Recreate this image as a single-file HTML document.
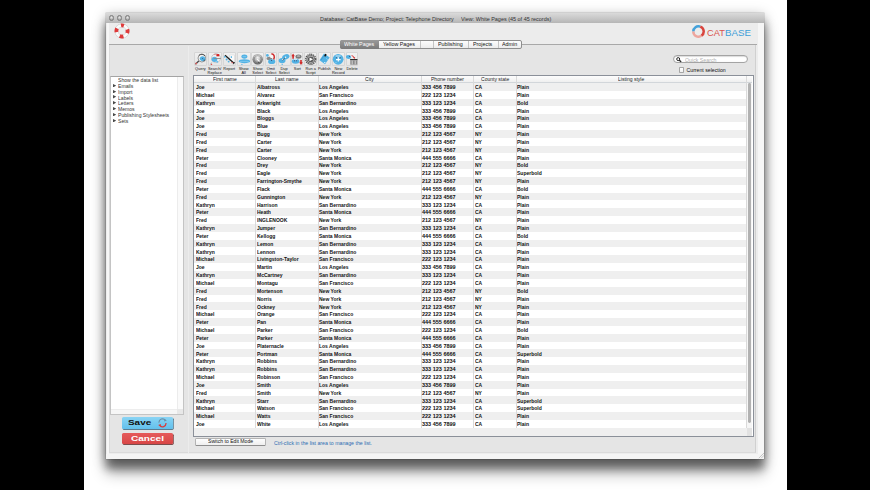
<!DOCTYPE html><html><head><meta charset="utf-8"><style>
*{margin:0;padding:0;box-sizing:border-box}
html,body{width:870px;height:490px;overflow:hidden;background:#000;font-family:"Liberation Sans",sans-serif}
.a{position:absolute}
.t{white-space:pre;line-height:1}
</style></head><body>
<div class="a" style="left:84.00px;top:0.00px;width:703.00px;height:490.00px;background:#fff"></div>
<div class="a" style="left:106.00px;top:13.10px;width:658.30px;height:445.80px;background:#ececec;box-shadow:0 3px 12px rgba(0,0,0,.34),0 10px 8px rgba(0,0,0,.32),0 14px 14px rgba(0,0,0,.32),0 0 0 0.5px rgba(0,0,0,.18)"></div>
<div class="a" style="left:106.00px;top:13.10px;width:658.30px;height:9.50px;background:linear-gradient(#dadada,#b6b6b6)"></div>
<div class="a" style="left:109.10px;top:15.20px;width:5.40px;height:5.40px;border-radius:50%;background:radial-gradient(circle at 50% 35%,#e4e4e4,#a4a4a4 80%);border:0.6px solid #7c7c7c"></div>
<div class="a" style="left:116.90px;top:15.20px;width:5.40px;height:5.40px;border-radius:50%;background:radial-gradient(circle at 50% 35%,#e4e4e4,#a4a4a4 80%);border:0.6px solid #7c7c7c"></div>
<div class="a" style="left:124.80px;top:15.20px;width:5.40px;height:5.40px;border-radius:50%;background:radial-gradient(circle at 50% 35%,#e4e4e4,#a4a4a4 80%);border:0.6px solid #7c7c7c"></div>
<div class="a t" style="left:320.20px;top:15.72px;font-size:6.0px;color:#333;transform:scaleX(0.9016);transform-origin:0 0;">Database: CatBase Demo; Project: Telephone Directory</div>
<div class="a t" style="left:460.60px;top:15.72px;font-size:6.0px;color:#333;transform:scaleX(0.9087);transform-origin:0 0;">View: White Pages (45 of 45 records)</div>
<div class="a" style="left:106.60px;top:22.60px;width:2.30px;height:436.30px;background:#f6f6f6"></div>
<div class="a" style="left:758.40px;top:22.60px;width:5.30px;height:436.30px;background:#f6f6f6"></div>
<div class="a" style="left:106.00px;top:453.50px;width:658.30px;height:5.40px;background:#f4f4f4"></div>
<div class="a" style="left:108.90px;top:44.20px;width:647.60px;height:409.30px;background:#e5e5e5;border-top:0.8px solid #c0c0c0;border-left:0.8px solid #dadada;border-right:0.8px solid #d0d0d0;border-bottom:0.8px solid #dadada"></div>
<svg class="a" style="left:757.6px;top:452.2px" width="6.4" height="6.4" viewBox="0 0 6.4 6.4"><path d="M6.2 0.8 L0.8 6.2 M6.2 3.2 L3.2 6.2" stroke="#b0b0b0" stroke-width="0.7"/></svg>
<svg class="a" style="left:113.6px;top:23.1px" width="16" height="16" viewBox="0 0 16 16">
<circle cx="8" cy="8" r="5.6" fill="none" stroke="#c8c8c8" stroke-width="3.6"/>
<circle cx="8" cy="8" r="5.6" fill="none" stroke="#fafafa" stroke-width="2.6"/>
<circle cx="8" cy="8" r="5.6" fill="none" stroke="#df3a3a" stroke-width="3.8" stroke-dasharray="3.9 4.9" stroke-dashoffset="1.95" transform="rotate(-90 8 8)"/>
</svg>
<svg class="a" style="left:691.6px;top:24.9px" width="13" height="13" viewBox="0 0 13 13">
<path d="M1.3 6.5 A5.2 5.2 0 0 1 8.3 1.6" fill="none" stroke="#45a2da" stroke-width="2.5"/>
<path d="M8.3 1.6 A5.2 5.2 0 0 1 9.4 10.8" fill="none" stroke="#d9453e" stroke-width="2.5"/>
<path d="M9.4 10.8 A5.2 5.2 0 0 1 1.3 6.5" fill="none" stroke="#eea69e" stroke-width="2.5"/>
</svg>
<div class="a t" style="left:706.80px;top:28.59px;font-size:8.4px;color:#d9524c;transform:scaleX(1.1065);transform-origin:0 0;">CAT</div>
<div class="a t" style="left:724.90px;top:28.59px;font-size:8.4px;color:#3d9ed8;transform:scaleX(1.1601);transform-origin:0 0;">BASE</div>
<div class="a" style="left:108.90px;top:44.20px;width:231.10px;height:0.90px;background:#a8a8a8"></div>
<div class="a" style="left:522.00px;top:44.20px;width:234.50px;height:0.90px;background:#a8a8a8"></div>
<div class="a" style="left:339.80px;top:40.20px;width:182.20px;height:8.50px;background:linear-gradient(#fdfdfd,#ececec);border:0.8px solid #8e8e8e;border-radius:2px"></div>
<div class="a" style="left:339.80px;top:40.20px;width:39.00px;height:8.50px;background:linear-gradient(#9a9a9a,#7a7a7a);border-radius:2px 0 0 2px"></div>
<div class="a" style="left:420.00px;top:41.00px;width:0.70px;height:6.90px;background:#c4c4c4"></div>
<div class="a" style="left:432.50px;top:41.00px;width:0.70px;height:6.90px;background:#c4c4c4"></div>
<div class="a" style="left:468.00px;top:41.00px;width:0.70px;height:6.90px;background:#c4c4c4"></div>
<div class="a" style="left:497.50px;top:41.00px;width:0.70px;height:6.90px;background:#c4c4c4"></div>
<div class="a t" style="left:344.15px;top:42.03px;font-size:5.4px;color:#fff;transform:scaleX(0.9900);transform-origin:0 0;">White Pages</div>
<div class="a t" style="left:383.05px;top:42.03px;font-size:5.4px;color:#111;transform:scaleX(0.9900);transform-origin:0 0;">Yellow Pages</div>
<div class="a t" style="left:437.87px;top:42.03px;font-size:5.4px;color:#111;transform:scaleX(0.9900);transform-origin:0 0;">Publishing</div>
<div class="a t" style="left:473.04px;top:42.03px;font-size:5.4px;color:#111;transform:scaleX(0.9900);transform-origin:0 0;">Projects</div>
<div class="a t" style="left:502.12px;top:42.03px;font-size:5.4px;color:#111;transform:scaleX(0.9900);transform-origin:0 0;">Admin</div>
<svg width="0" height="0" style="position:absolute"><defs><radialGradient id="gm" cx="50%" cy="35%" r="65%"><stop offset="0" stop-color="#f4f4f4"/><stop offset="0.6" stop-color="#a0a0a0"/><stop offset="1" stop-color="#5a5a5a"/></radialGradient></defs></svg>
<div class="a" style="left:193.70px;top:52.00px;width:13.30px;height:14.20px;background:linear-gradient(#f0f0f0,#e6e6e6);border:0.6px solid #d6d6d6;border-radius:1px"></div>
<svg class="a" style="left:194.35px;top:52.8px" width="12" height="12" viewBox="0 0 12 12"><circle cx="7.9" cy="5.1" r="3.9" fill="#f2f2f2" stroke="#8a8a8a" stroke-width="0.9"/><path d="M5 2.4 A3.9 3.9 0 0 1 11 3" fill="none" stroke="#4a4a4a" stroke-width="0.9"/><path d="M5.6 5.2 Q7 2.6 9.6 3.4 Q12 4.4 11.4 6.8 Q10.4 8.4 8 8.2 Q6 8 5.6 5.2Z" fill="#52b2e4"/><circle cx="8.6" cy="5.4" r="0.5" fill="#3a5a7a"/><circle cx="10.2" cy="7.2" r="0.6" fill="#333"/><line x1="4.8" y1="8" x2="1.4" y2="11.2" stroke="#4a4a4a" stroke-width="1.3"/><circle cx="2.2" cy="10.4" r="0.9" fill="#e06060"/></svg>
<div class="a t" style="left:195.04px;top:67.30px;font-size:3.9px;color:#111;">Query</div>
<div class="a" style="left:207.60px;top:52.00px;width:14.30px;height:14.20px;background:linear-gradient(#f0f0f0,#e6e6e6);border:0.6px solid #d6d6d6;border-radius:1px"></div>
<svg class="a" style="left:208.75px;top:52.8px" width="12" height="12" viewBox="0 0 12 12"><circle cx="7" cy="5.2" r="4.5" fill="#efefef" stroke="#b0b0b0" stroke-width="0.6"/><ellipse cx="5.4" cy="6.3" rx="2.8" ry="2.6" fill="#56b4e6"/><circle cx="8.2" cy="8.8" r="1" fill="#66c0ee"/><line x1="4.6" y1="5.5" x2="11.8" y2="5.5" stroke="#8a8a8a" stroke-width="0.9"/><rect x="7.4" y="1.1" width="2.9" height="2.2" fill="#d42020"/><path d="M4.8 1.6 L7.4 1" stroke="#e07070" stroke-width="0.7"/><line x1="2.6" y1="9.6" x2="1.4" y2="11.6" stroke="#999" stroke-width="0.8"/><circle cx="2.6" cy="11.4" r="0.6" fill="#d44"/></svg>
<div class="a t" style="left:208.03px;top:67.30px;font-size:3.9px;color:#111;">Search/</div>
<div class="a t" style="left:207.60px;top:71.00px;font-size:3.9px;color:#111;">Replace</div>
<div class="a" style="left:222.50px;top:52.00px;width:13.40px;height:14.20px;background:linear-gradient(#f0f0f0,#e6e6e6);border:0.6px solid #d6d6d6;border-radius:1px"></div>
<svg class="a" style="left:223.20px;top:52.8px" width="12" height="12" viewBox="0 0 12 12"><rect x="6.8" y="2" width="4.4" height="8" fill="#fafafa" stroke="#d0d0d0" stroke-width="0.4"/><line x1="2" y1="2.3" x2="11" y2="10.2" stroke="#222" stroke-width="1.4"/><circle cx="1.8" cy="3.8" r="0.9" fill="#50b4e6"/><circle cx="3.6" cy="6.4" r="1" fill="#50b4e6"/><circle cx="5.6" cy="8.6" r="0.9" fill="#50b4e6"/><rect x="7.8" y="3.2" width="1.1" height="1.8" fill="#50b4e6"/><rect x="8.4" y="9.2" width="1.6" height="0.9" fill="#e05050"/><path d="M11.6 9.2 L10.4 11.2" stroke="#222" stroke-width="0.9"/></svg>
<div class="a t" style="left:223.35px;top:67.30px;font-size:3.9px;color:#111;">Report</div>
<div class="a" style="left:236.50px;top:52.00px;width:14.30px;height:14.20px;background:linear-gradient(#f0f0f0,#e6e6e6);border:0.6px solid #d6d6d6;border-radius:1px"></div>
<svg class="a" style="left:237.65px;top:52.8px" width="12" height="12" viewBox="0 0 12 12"><ellipse cx="6.4" cy="3.6" rx="3" ry="2.1" fill="#52b2e4"/><ellipse cx="6.4" cy="8.2" rx="5.8" ry="1.95" fill="#52b2e4"/><rect x="4.6" y="3.4" width="3.6" height="0.7" fill="#8fd0f0"/><rect x="2" y="8" width="8.8" height="0.6" fill="#8fd0f0"/><circle cx="3.9" cy="11.4" r="0.6" fill="#52b2e4"/></svg>
<div class="a t" style="left:238.77px;top:67.30px;font-size:3.9px;color:#111;">Show</div>
<div class="a t" style="left:241.48px;top:71.00px;font-size:3.9px;color:#111;">All</div>
<div class="a" style="left:251.40px;top:52.00px;width:12.70px;height:14.20px;background:linear-gradient(#f0f0f0,#e6e6e6);border:0.6px solid #d6d6d6;border-radius:1px"></div>
<svg class="a" style="left:251.75px;top:52.8px" width="12" height="12" viewBox="0 0 12 12"><circle cx="5.7" cy="6.2" r="5.2" fill="url(#gm)"/><path d="M2.6 3.6 Q5.7 1.8 8.8 3.6" fill="none" stroke="#fafafa" stroke-width="1"/><circle cx="5.7" cy="6.2" r="3.6" fill="none" stroke="#7a7a7a" stroke-width="0.6"/><path d="M5 6.2 L7.6 8.4" stroke="#fff" stroke-width="1.1"/><circle cx="6.8" cy="9.4" r="0.5" fill="#333"/></svg>
<div class="a t" style="left:252.87px;top:67.30px;font-size:3.9px;color:#111;">Show</div>
<div class="a t" style="left:252.33px;top:71.00px;font-size:3.9px;color:#111;">Select</div>
<div class="a" style="left:264.70px;top:52.00px;width:12.30px;height:14.20px;background:linear-gradient(#f0f0f0,#e6e6e6);border:0.6px solid #d6d6d6;border-radius:1px"></div>
<svg class="a" style="left:264.85px;top:52.8px" width="12" height="12" viewBox="0 0 12 12"><circle cx="2.4" cy="2.4" r="1.4" fill="#52b2e4"/><ellipse cx="4.4" cy="5.4" rx="2.9" ry="1.7" fill="#8a8a8a"/><rect x="5.4" y="2" width="2.4" height="3" fill="#fafafa"/><path d="M6.4 0.8 Q10.8 1.6 8.6 6.6" fill="none" stroke="#d03030" stroke-width="1.5"/><ellipse cx="6.7" cy="8.7" rx="3.6" ry="2.4" fill="#52b2e4"/><circle cx="6.6" cy="7.6" r="0.5" fill="#335"/></svg>
<div class="a t" style="left:266.73px;top:67.30px;font-size:3.9px;color:#111;">Omit</div>
<div class="a t" style="left:265.43px;top:71.00px;font-size:3.9px;color:#111;">Select</div>
<div class="a" style="left:277.60px;top:52.00px;width:13.10px;height:14.20px;background:linear-gradient(#f0f0f0,#e6e6e6);border:0.6px solid #d6d6d6;border-radius:1px"></div>
<svg class="a" style="left:278.15px;top:52.8px" width="12" height="12" viewBox="0 0 12 12"><ellipse cx="4.1" cy="7.6" rx="3.4" ry="2.7" fill="#52b2e4"/><ellipse cx="7.8" cy="3.9" rx="3.8" ry="2.6" fill="#52b2e4" transform="rotate(-20 7.8 3.9)"/><path d="M4.6 7.4 L7.8 4" stroke="#555" stroke-width="0.7"/><circle cx="7.6" cy="4.2" r="0.7" fill="#fff"/><circle cx="4.6" cy="6.4" r="0.6" fill="#ddd"/><circle cx="4.2" cy="11.4" r="0.6" fill="#52b2e4"/></svg>
<div class="a t" style="left:280.57px;top:67.30px;font-size:3.9px;color:#111;">Dup</div>
<div class="a t" style="left:278.73px;top:71.00px;font-size:3.9px;color:#111;">Select</div>
<div class="a" style="left:291.30px;top:52.00px;width:12.20px;height:14.20px;background:linear-gradient(#f0f0f0,#e6e6e6);border:0.6px solid #d6d6d6;border-radius:1px"></div>
<svg class="a" style="left:291.40px;top:52.8px" width="12" height="12" viewBox="0 0 12 12"><ellipse cx="7.5" cy="3.6" rx="3" ry="2.2" fill="#7a7a7a"/><ellipse cx="7.5" cy="3" rx="1.8" ry="0.6" fill="#d8d8d8"/><path d="M2.1 0.4 L3.7 3 L2.9 3.4 L2.9 5.8 L1.3 5.8 L1.3 3.4 L0.5 3Z" fill="#d02a2a"/><ellipse cx="4.6" cy="8.2" rx="3.8" ry="2.5" fill="#52b2e4"/><rect x="2.6" y="6.2" width="3.6" height="0.9" fill="#dff0f8"/><circle cx="3.6" cy="7.8" r="0.5" fill="#335"/><circle cx="5.6" cy="7.8" r="0.5" fill="#335"/><path d="M10 12 L11.7 9.4 L10.8 9 L10.8 7 L9.2 7 L9.2 9 L8.3 9.4Z" fill="#d02a2a"/></svg>
<div class="a t" style="left:293.82px;top:67.30px;font-size:3.9px;color:#111;">Sort</div>
<div class="a" style="left:304.10px;top:52.00px;width:13.10px;height:14.20px;background:linear-gradient(#f0f0f0,#e6e6e6);border:0.6px solid #d6d6d6;border-radius:1px"></div>
<svg class="a" style="left:304.65px;top:52.8px" width="12" height="12" viewBox="0 0 12 12"><circle cx="5.75" cy="6.3" r="5" fill="none" stroke="#555" stroke-width="1.4" stroke-dasharray="1.2 0.75"/><circle cx="5.75" cy="6.3" r="4" fill="#cfcfcf" stroke="#555" stroke-width="0.8"/><circle cx="5.75" cy="6.3" r="2.9" fill="#5a5a5a"/><path d="M4.5 4.4 L8 6.3 L4.5 8.2Z" fill="#fff"/></svg>
<div class="a t" style="left:305.45px;top:67.30px;font-size:3.9px;color:#111;">Run a</div>
<div class="a t" style="left:305.67px;top:71.00px;font-size:3.9px;color:#111;">Script</div>
<div class="a" style="left:317.80px;top:52.00px;width:13.20px;height:14.20px;background:linear-gradient(#f0f0f0,#e6e6e6);border:0.6px solid #d6d6d6;border-radius:1px"></div>
<svg class="a" style="left:318.40px;top:52.8px" width="12" height="12" viewBox="0 0 12 12"><path d="M1.5 7.2 L6 0.4 L11.7 4.6 L7 11.3Z" fill="#52b2e4"/><path d="M3 7 L6.4 2" stroke="#3a8abb" stroke-width="0.6"/><ellipse cx="7.4" cy="2.2" rx="0.9" ry="1.5" fill="#111" transform="rotate(30 7.4 2.2)"/><circle cx="6.8" cy="9.6" r="0.7" fill="#fff"/><path d="M8 5 L10 7" stroke="#8fd0f0" stroke-width="0.7"/></svg>
<div class="a t" style="left:318.00px;top:67.30px;font-size:3.9px;color:#111;">Publish</div>
<div class="a" style="left:331.60px;top:52.00px;width:13.50px;height:14.20px;background:linear-gradient(#f0f0f0,#e6e6e6);border:0.6px solid #d6d6d6;border-radius:1px"></div>
<svg class="a" style="left:332.35px;top:52.8px" width="12" height="12" viewBox="0 0 12 12"><circle cx="6.15" cy="6.3" r="5.4" fill="#52b2e4"/><rect x="3.6" y="2.6" width="5" height="0.8" fill="#f4f4f4"/><path d="M6.3 4.2 V8.6 M4 6.6 H8.6" stroke="#fff" stroke-width="1.1"/><circle cx="4.4" cy="4.8" r="0.5" fill="#335"/><circle cx="8.2" cy="4.8" r="0.5" fill="#335"/><circle cx="4" cy="9.6" r="0.7" fill="#8fd0f0"/></svg>
<div class="a t" style="left:334.45px;top:67.30px;font-size:3.9px;color:#111;">New</div>
<div class="a t" style="left:332.06px;top:71.00px;font-size:3.9px;color:#111;">Record</div>
<div class="a" style="left:345.70px;top:52.00px;width:12.70px;height:14.20px;background:linear-gradient(#f0f0f0,#e6e6e6);border:0.6px solid #d6d6d6;border-radius:1px"></div>
<svg class="a" style="left:346.05px;top:52.8px" width="12" height="12" viewBox="0 0 12 12"><ellipse cx="2.5" cy="3.9" rx="2.6" ry="2" fill="#52b2e4"/><circle cx="3.6" cy="3.2" r="0.5" fill="#335"/><path d="M5.6 2.6 Q7.6 2.8 8.2 5" fill="none" stroke="#d42a2a" stroke-width="0.9"/><path d="M7.2 4.4 L8.4 6 L9.2 4.2Z" fill="#d42a2a"/><rect x="4" y="6" width="7.6" height="1.3" rx="0.6" fill="#2a2a2a"/><rect x="4.3" y="7.3" width="7" height="4.4" fill="#8a8a8a"/><path d="M6.2 7.6 V11.4 M9.2 7.6 V11.4" stroke="#e8e8e8" stroke-width="0.8"/></svg>
<div class="a t" style="left:346.41px;top:67.30px;font-size:3.9px;color:#111;">Delete</div>
<div class="a" style="left:673.30px;top:55.30px;width:74.60px;height:7.90px;background:#fff;border:0.7px solid #a4a4a4;border-radius:5px;box-shadow:inset 0 0.6px 1px rgba(0,0,0,.25)"></div>
<svg class="a" style="left:676.4px;top:57.2px" width="6" height="5.4" viewBox="0 0 6 5.4"><circle cx="2.2" cy="2.1" r="1.5" fill="none" stroke="#222" stroke-width="1"/><line x1="3.2" y1="3.2" x2="5.2" y2="4.8" stroke="#222" stroke-width="1.3"/></svg>
<div class="a t" style="left:684.90px;top:58.10px;font-size:5.2px;color:#b0b0b0;transform:scaleX(1.0092);transform-origin:0 0;">Quick Search</div>
<div class="a" style="left:679.10px;top:67.40px;width:5.30px;height:5.30px;background:linear-gradient(#fff,#f0f0f0);border:0.7px solid #a6a6a6;border-radius:0.8px"></div>
<div class="a t" style="left:686.50px;top:67.60px;font-size:5.2px;color:#111;">Current selection</div>
<div class="a" style="left:110.30px;top:76.00px;width:73.70px;height:339.00px;background:#fff;border:0.8px solid #c4c4c4;border-top-color:#a4a4a4"></div>
<div class="a" style="left:177.40px;top:76.80px;width:5.80px;height:337.40px;background:#fafafa;border-left:0.6px solid #ececec"></div>
<div class="a" style="left:111.10px;top:409.00px;width:66.30px;height:5.20px;background:#f6f6f6;border-top:0.6px solid #ededed"></div>
<div class="a" style="left:177.40px;top:409.00px;width:5.80px;height:5.20px;background:#e8e8e8"></div>
<div class="a t" style="left:118.10px;top:78.00px;font-size:5.2px;color:#333;transform:scaleX(0.9800);transform-origin:0 0;">Show the data list</div>
<svg class="a" style="left:112.8px;top:83.66px" width="3.2" height="3.4" viewBox="0 0 3.2 3.4"><path d="M0 0 L3.2 1.7 L0 3.4Z" fill="#4a4a4a"/></svg>
<div class="a t" style="left:118.10px;top:83.86px;font-size:5.2px;color:#333;transform:scaleX(0.9800);transform-origin:0 0;">Emails</div>
<svg class="a" style="left:112.8px;top:89.52px" width="3.2" height="3.4" viewBox="0 0 3.2 3.4"><path d="M0 0 L3.2 1.7 L0 3.4Z" fill="#4a4a4a"/></svg>
<div class="a t" style="left:118.10px;top:89.72px;font-size:5.2px;color:#333;transform:scaleX(0.9800);transform-origin:0 0;">Import</div>
<svg class="a" style="left:112.8px;top:95.38px" width="3.2" height="3.4" viewBox="0 0 3.2 3.4"><path d="M0 0 L3.2 1.7 L0 3.4Z" fill="#4a4a4a"/></svg>
<div class="a t" style="left:118.10px;top:95.58px;font-size:5.2px;color:#333;transform:scaleX(0.9800);transform-origin:0 0;">Labels</div>
<svg class="a" style="left:112.8px;top:101.24px" width="3.2" height="3.4" viewBox="0 0 3.2 3.4"><path d="M0 0 L3.2 1.7 L0 3.4Z" fill="#4a4a4a"/></svg>
<div class="a t" style="left:118.10px;top:101.44px;font-size:5.2px;color:#333;transform:scaleX(0.9800);transform-origin:0 0;">Letters</div>
<svg class="a" style="left:112.8px;top:107.10px" width="3.2" height="3.4" viewBox="0 0 3.2 3.4"><path d="M0 0 L3.2 1.7 L0 3.4Z" fill="#4a4a4a"/></svg>
<div class="a t" style="left:118.10px;top:107.30px;font-size:5.2px;color:#333;transform:scaleX(0.9800);transform-origin:0 0;">Memos</div>
<svg class="a" style="left:112.8px;top:112.96px" width="3.2" height="3.4" viewBox="0 0 3.2 3.4"><path d="M0 0 L3.2 1.7 L0 3.4Z" fill="#4a4a4a"/></svg>
<div class="a t" style="left:118.10px;top:113.16px;font-size:5.2px;color:#333;transform:scaleX(0.9800);transform-origin:0 0;">Publishing Stylesheets</div>
<svg class="a" style="left:112.8px;top:118.82px" width="3.2" height="3.4" viewBox="0 0 3.2 3.4"><path d="M0 0 L3.2 1.7 L0 3.4Z" fill="#4a4a4a"/></svg>
<div class="a t" style="left:118.10px;top:119.02px;font-size:5.2px;color:#333;transform:scaleX(0.9800);transform-origin:0 0;">Sets</div>
<div class="a" style="left:188.30px;top:45.60px;width:0.80px;height:407.90px;background:#ececec"></div>
<div class="a" style="left:121.80px;top:417.00px;width:51.40px;height:11.50px;background:linear-gradient(#8ad4f4,#62c0ec);border-radius:1.5px;box-shadow:0.6px 0.8px 0 #2e5a74"></div>
<div class="a t" style="left:127.70px;top:418.60px;font-size:7.8px;color:#111;font-weight:bold;transform:scaleX(1.2736);transform-origin:0 0;">Save</div>
<svg class="a" style="left:156.6px;top:418.4px" width="11" height="9.6" viewBox="0 0 11 9.6"><path d="M2 4.6 A3.5 3.5 0 0 1 8.4 2.4" fill="none" stroke="#6a8fa8" stroke-width="1.2"/><path d="M9 5 A3.5 3.5 0 0 1 2.6 7.2" fill="none" stroke="#d83c3c" stroke-width="1.2"/><path d="M7.4 0.9 L9.8 2.6 L7.2 3.6Z" fill="#6a8fa8"/><path d="M3.6 8.7 L1.2 7 L3.8 6Z" fill="#d83c3c"/></svg>
<div class="a" style="left:121.80px;top:433.00px;width:51.40px;height:11.20px;background:linear-gradient(#e55a5a,#d84646);border-radius:1.5px;box-shadow:0.6px 0.8px 0 #5a1a1a"></div>
<div class="a t" style="left:130.80px;top:434.74px;font-size:7.4px;color:#fff;font-weight:bold;transform:scaleX(1.3600);transform-origin:0 0;">Cancel</div>
<div class="a" style="left:194.60px;top:438.00px;width:71.30px;height:7.60px;background:linear-gradient(#fefefe,#efefef);border:0.7px solid #b4b4b4;border-bottom-color:#8e8e8e;border-radius:1.5px"></div>
<div class="a t" style="left:207.80px;top:438.83px;font-size:5.4px;color:#111;transform:scaleX(0.9472);transform-origin:0 0;">Switch to Edit Mode</div>
<div class="a t" style="left:273.50px;top:440.70px;font-size:5.2px;color:#2c6db2;transform:scaleX(1.0054);transform-origin:0 0;">Ctrl-click in the list area to manage the list.</div>
<div class="a" style="left:193.00px;top:75.00px;width:560.60px;height:361.60px;background:#fff;border:1.1px solid #8b9099"></div>
<div class="a" style="left:194.10px;top:76.10px;width:558.40px;height:6.75px;background:linear-gradient(#fdfdfd,#efefef);border-bottom:0.8px solid #d2d6da"></div>
<div class="a" style="left:194.10px;top:82.85px;width:552.60px;height:7.84px;background:#efefef"></div>
<div class="a" style="left:194.10px;top:98.53px;width:552.60px;height:7.84px;background:#efefef"></div>
<div class="a" style="left:194.10px;top:114.21px;width:552.60px;height:7.84px;background:#efefef"></div>
<div class="a" style="left:194.10px;top:129.89px;width:552.60px;height:7.84px;background:#efefef"></div>
<div class="a" style="left:194.10px;top:145.57px;width:552.60px;height:7.84px;background:#efefef"></div>
<div class="a" style="left:194.10px;top:161.25px;width:552.60px;height:7.84px;background:#efefef"></div>
<div class="a" style="left:194.10px;top:176.93px;width:552.60px;height:7.84px;background:#efefef"></div>
<div class="a" style="left:194.10px;top:192.61px;width:552.60px;height:7.84px;background:#efefef"></div>
<div class="a" style="left:194.10px;top:208.29px;width:552.60px;height:7.84px;background:#efefef"></div>
<div class="a" style="left:194.10px;top:223.97px;width:552.60px;height:7.84px;background:#efefef"></div>
<div class="a" style="left:194.10px;top:239.65px;width:552.60px;height:7.84px;background:#efefef"></div>
<div class="a" style="left:194.10px;top:255.33px;width:552.60px;height:7.84px;background:#efefef"></div>
<div class="a" style="left:194.10px;top:271.01px;width:552.60px;height:7.84px;background:#efefef"></div>
<div class="a" style="left:194.10px;top:286.69px;width:552.60px;height:7.84px;background:#efefef"></div>
<div class="a" style="left:194.10px;top:302.37px;width:552.60px;height:7.84px;background:#efefef"></div>
<div class="a" style="left:194.10px;top:318.05px;width:552.60px;height:7.84px;background:#efefef"></div>
<div class="a" style="left:194.10px;top:333.73px;width:552.60px;height:7.84px;background:#efefef"></div>
<div class="a" style="left:194.10px;top:349.41px;width:552.60px;height:7.84px;background:#efefef"></div>
<div class="a" style="left:194.10px;top:365.09px;width:552.60px;height:7.84px;background:#efefef"></div>
<div class="a" style="left:194.10px;top:380.77px;width:552.60px;height:7.84px;background:#efefef"></div>
<div class="a" style="left:194.10px;top:396.45px;width:552.60px;height:7.84px;background:#efefef"></div>
<div class="a" style="left:194.10px;top:412.13px;width:552.60px;height:7.84px;background:#efefef"></div>
<div class="a" style="left:194.10px;top:427.81px;width:552.60px;height:7.69px;background:#efefef"></div>
<div class="a" style="left:194.10px;top:428.00px;width:558.40px;height:7.50px;background:#efefef"></div>
<div class="a" style="left:255.10px;top:76.10px;width:0.80px;height:351.90px;background:#dadada"></div>
<div class="a" style="left:317.90px;top:76.10px;width:0.80px;height:351.90px;background:#dadada"></div>
<div class="a" style="left:420.60px;top:76.10px;width:0.80px;height:351.90px;background:#dadada"></div>
<div class="a" style="left:473.40px;top:76.10px;width:0.80px;height:351.90px;background:#dadada"></div>
<div class="a" style="left:515.50px;top:76.10px;width:0.80px;height:351.90px;background:#dadada"></div>
<div class="a" style="left:746.30px;top:76.10px;width:0.80px;height:351.90px;background:#dadada"></div>
<div class="a" style="left:746.70px;top:82.85px;width:5.80px;height:352.65px;background:#f6f6f6"></div>
<div class="a" style="left:748.10px;top:83.30px;width:2.90px;height:339.30px;background:#b2b2b2;border-radius:1.4px"></div>
<div class="a" style="left:746.70px;top:428.00px;width:5.80px;height:7.50px;background:#e2e2e2"></div>
<div class="a t" style="left:213.11px;top:76.51px;font-size:5.3px;color:#222;transform:scaleX(0.9500);transform-origin:0 0;">First name</div>
<div class="a t" style="left:275.15px;top:76.51px;font-size:5.3px;color:#222;transform:scaleX(0.9500);transform-origin:0 0;">Last name</div>
<div class="a t" style="left:365.31px;top:76.51px;font-size:5.3px;color:#222;transform:scaleX(0.9500);transform-origin:0 0;">City</div>
<div class="a t" style="left:430.89px;top:76.51px;font-size:5.3px;color:#222;transform:scaleX(0.9500);transform-origin:0 0;">Phone number</div>
<div class="a t" style="left:480.72px;top:76.51px;font-size:5.3px;color:#222;transform:scaleX(0.9500);transform-origin:0 0;">County state</div>
<div class="a t" style="left:618.15px;top:76.51px;font-size:5.3px;color:#222;transform:scaleX(0.9500);transform-origin:0 0;">Listing style</div>
<div class="a t" style="left:195.70px;top:84.99px;font-size:5.5px;color:#111;font-weight:bold;transform:scaleX(0.9100);transform-origin:0 0;">Joe</div>
<div class="a t" style="left:256.50px;top:84.99px;font-size:5.5px;color:#111;font-weight:bold;transform:scaleX(0.9100);transform-origin:0 0;">Albatross</div>
<div class="a t" style="left:319.30px;top:84.99px;font-size:5.5px;color:#111;font-weight:bold;transform:scaleX(0.9100);transform-origin:0 0;">Los Angeles</div>
<div class="a t" style="left:422.00px;top:84.99px;font-size:5.5px;color:#111;font-weight:bold;">333 456 7899</div>
<div class="a t" style="left:474.80px;top:84.99px;font-size:5.5px;color:#111;font-weight:bold;transform:scaleX(0.9100);transform-origin:0 0;">CA</div>
<div class="a t" style="left:516.90px;top:84.99px;font-size:5.5px;color:#111;font-weight:bold;transform:scaleX(0.9100);transform-origin:0 0;">Plain</div>
<div class="a t" style="left:195.70px;top:92.83px;font-size:5.5px;color:#111;font-weight:bold;transform:scaleX(0.9100);transform-origin:0 0;">Michael</div>
<div class="a t" style="left:256.50px;top:92.83px;font-size:5.5px;color:#111;font-weight:bold;transform:scaleX(0.9100);transform-origin:0 0;">Alvarez</div>
<div class="a t" style="left:319.30px;top:92.83px;font-size:5.5px;color:#111;font-weight:bold;transform:scaleX(0.9100);transform-origin:0 0;">San Francisco</div>
<div class="a t" style="left:422.00px;top:92.83px;font-size:5.5px;color:#111;font-weight:bold;">222 123 1234</div>
<div class="a t" style="left:474.80px;top:92.83px;font-size:5.5px;color:#111;font-weight:bold;transform:scaleX(0.9100);transform-origin:0 0;">CA</div>
<div class="a t" style="left:516.90px;top:92.83px;font-size:5.5px;color:#111;font-weight:bold;transform:scaleX(0.9100);transform-origin:0 0;">Plain</div>
<div class="a t" style="left:195.70px;top:100.67px;font-size:5.5px;color:#111;font-weight:bold;transform:scaleX(0.9100);transform-origin:0 0;">Kathryn</div>
<div class="a t" style="left:256.50px;top:100.67px;font-size:5.5px;color:#111;font-weight:bold;transform:scaleX(0.9100);transform-origin:0 0;">Arkwright</div>
<div class="a t" style="left:319.30px;top:100.67px;font-size:5.5px;color:#111;font-weight:bold;transform:scaleX(0.9100);transform-origin:0 0;">San Bernardino</div>
<div class="a t" style="left:422.00px;top:100.67px;font-size:5.5px;color:#111;font-weight:bold;">333 123 1234</div>
<div class="a t" style="left:474.80px;top:100.67px;font-size:5.5px;color:#111;font-weight:bold;transform:scaleX(0.9100);transform-origin:0 0;">CA</div>
<div class="a t" style="left:516.90px;top:100.67px;font-size:5.5px;color:#111;font-weight:bold;transform:scaleX(0.9100);transform-origin:0 0;">Bold</div>
<div class="a t" style="left:195.70px;top:108.51px;font-size:5.5px;color:#111;font-weight:bold;transform:scaleX(0.9100);transform-origin:0 0;">Joe</div>
<div class="a t" style="left:256.50px;top:108.51px;font-size:5.5px;color:#111;font-weight:bold;transform:scaleX(0.9100);transform-origin:0 0;">Black</div>
<div class="a t" style="left:319.30px;top:108.51px;font-size:5.5px;color:#111;font-weight:bold;transform:scaleX(0.9100);transform-origin:0 0;">Los Angeles</div>
<div class="a t" style="left:422.00px;top:108.51px;font-size:5.5px;color:#111;font-weight:bold;">333 456 7899</div>
<div class="a t" style="left:474.80px;top:108.51px;font-size:5.5px;color:#111;font-weight:bold;transform:scaleX(0.9100);transform-origin:0 0;">CA</div>
<div class="a t" style="left:516.90px;top:108.51px;font-size:5.5px;color:#111;font-weight:bold;transform:scaleX(0.9100);transform-origin:0 0;">Plain</div>
<div class="a t" style="left:195.70px;top:116.35px;font-size:5.5px;color:#111;font-weight:bold;transform:scaleX(0.9100);transform-origin:0 0;">Joe</div>
<div class="a t" style="left:256.50px;top:116.35px;font-size:5.5px;color:#111;font-weight:bold;transform:scaleX(0.9100);transform-origin:0 0;">Bloggs</div>
<div class="a t" style="left:319.30px;top:116.35px;font-size:5.5px;color:#111;font-weight:bold;transform:scaleX(0.9100);transform-origin:0 0;">Los Angeles</div>
<div class="a t" style="left:422.00px;top:116.35px;font-size:5.5px;color:#111;font-weight:bold;">333 456 7899</div>
<div class="a t" style="left:474.80px;top:116.35px;font-size:5.5px;color:#111;font-weight:bold;transform:scaleX(0.9100);transform-origin:0 0;">CA</div>
<div class="a t" style="left:516.90px;top:116.35px;font-size:5.5px;color:#111;font-weight:bold;transform:scaleX(0.9100);transform-origin:0 0;">Plain</div>
<div class="a t" style="left:195.70px;top:124.19px;font-size:5.5px;color:#111;font-weight:bold;transform:scaleX(0.9100);transform-origin:0 0;">Joe</div>
<div class="a t" style="left:256.50px;top:124.19px;font-size:5.5px;color:#111;font-weight:bold;transform:scaleX(0.9100);transform-origin:0 0;">Blue</div>
<div class="a t" style="left:319.30px;top:124.19px;font-size:5.5px;color:#111;font-weight:bold;transform:scaleX(0.9100);transform-origin:0 0;">Los Angeles</div>
<div class="a t" style="left:422.00px;top:124.19px;font-size:5.5px;color:#111;font-weight:bold;">333 456 7899</div>
<div class="a t" style="left:474.80px;top:124.19px;font-size:5.5px;color:#111;font-weight:bold;transform:scaleX(0.9100);transform-origin:0 0;">CA</div>
<div class="a t" style="left:516.90px;top:124.19px;font-size:5.5px;color:#111;font-weight:bold;transform:scaleX(0.9100);transform-origin:0 0;">Plain</div>
<div class="a t" style="left:195.70px;top:132.03px;font-size:5.5px;color:#111;font-weight:bold;transform:scaleX(0.9100);transform-origin:0 0;">Fred</div>
<div class="a t" style="left:256.50px;top:132.03px;font-size:5.5px;color:#111;font-weight:bold;transform:scaleX(0.9100);transform-origin:0 0;">Bugg</div>
<div class="a t" style="left:319.30px;top:132.03px;font-size:5.5px;color:#111;font-weight:bold;transform:scaleX(0.9100);transform-origin:0 0;">New York</div>
<div class="a t" style="left:422.00px;top:132.03px;font-size:5.5px;color:#111;font-weight:bold;">212 123 4567</div>
<div class="a t" style="left:474.80px;top:132.03px;font-size:5.5px;color:#111;font-weight:bold;transform:scaleX(0.9100);transform-origin:0 0;">NY</div>
<div class="a t" style="left:516.90px;top:132.03px;font-size:5.5px;color:#111;font-weight:bold;transform:scaleX(0.9100);transform-origin:0 0;">Plain</div>
<div class="a t" style="left:195.70px;top:139.87px;font-size:5.5px;color:#111;font-weight:bold;transform:scaleX(0.9100);transform-origin:0 0;">Fred</div>
<div class="a t" style="left:256.50px;top:139.87px;font-size:5.5px;color:#111;font-weight:bold;transform:scaleX(0.9100);transform-origin:0 0;">Carter</div>
<div class="a t" style="left:319.30px;top:139.87px;font-size:5.5px;color:#111;font-weight:bold;transform:scaleX(0.9100);transform-origin:0 0;">New York</div>
<div class="a t" style="left:422.00px;top:139.87px;font-size:5.5px;color:#111;font-weight:bold;">212 123 4567</div>
<div class="a t" style="left:474.80px;top:139.87px;font-size:5.5px;color:#111;font-weight:bold;transform:scaleX(0.9100);transform-origin:0 0;">NY</div>
<div class="a t" style="left:516.90px;top:139.87px;font-size:5.5px;color:#111;font-weight:bold;transform:scaleX(0.9100);transform-origin:0 0;">Plain</div>
<div class="a t" style="left:195.70px;top:147.71px;font-size:5.5px;color:#111;font-weight:bold;transform:scaleX(0.9100);transform-origin:0 0;">Fred</div>
<div class="a t" style="left:256.50px;top:147.71px;font-size:5.5px;color:#111;font-weight:bold;transform:scaleX(0.9100);transform-origin:0 0;">Carter</div>
<div class="a t" style="left:319.30px;top:147.71px;font-size:5.5px;color:#111;font-weight:bold;transform:scaleX(0.9100);transform-origin:0 0;">New York</div>
<div class="a t" style="left:422.00px;top:147.71px;font-size:5.5px;color:#111;font-weight:bold;">212 123 4567</div>
<div class="a t" style="left:474.80px;top:147.71px;font-size:5.5px;color:#111;font-weight:bold;transform:scaleX(0.9100);transform-origin:0 0;">NY</div>
<div class="a t" style="left:516.90px;top:147.71px;font-size:5.5px;color:#111;font-weight:bold;transform:scaleX(0.9100);transform-origin:0 0;">Plain</div>
<div class="a t" style="left:195.70px;top:155.55px;font-size:5.5px;color:#111;font-weight:bold;transform:scaleX(0.9100);transform-origin:0 0;">Peter</div>
<div class="a t" style="left:256.50px;top:155.55px;font-size:5.5px;color:#111;font-weight:bold;transform:scaleX(0.9100);transform-origin:0 0;">Clooney</div>
<div class="a t" style="left:319.30px;top:155.55px;font-size:5.5px;color:#111;font-weight:bold;transform:scaleX(0.9100);transform-origin:0 0;">Santa Monica</div>
<div class="a t" style="left:422.00px;top:155.55px;font-size:5.5px;color:#111;font-weight:bold;">444 555 6666</div>
<div class="a t" style="left:474.80px;top:155.55px;font-size:5.5px;color:#111;font-weight:bold;transform:scaleX(0.9100);transform-origin:0 0;">CA</div>
<div class="a t" style="left:516.90px;top:155.55px;font-size:5.5px;color:#111;font-weight:bold;transform:scaleX(0.9100);transform-origin:0 0;">Plain</div>
<div class="a t" style="left:195.70px;top:163.39px;font-size:5.5px;color:#111;font-weight:bold;transform:scaleX(0.9100);transform-origin:0 0;">Fred</div>
<div class="a t" style="left:256.50px;top:163.39px;font-size:5.5px;color:#111;font-weight:bold;transform:scaleX(0.9100);transform-origin:0 0;">Drey</div>
<div class="a t" style="left:319.30px;top:163.39px;font-size:5.5px;color:#111;font-weight:bold;transform:scaleX(0.9100);transform-origin:0 0;">New York</div>
<div class="a t" style="left:422.00px;top:163.39px;font-size:5.5px;color:#111;font-weight:bold;">212 123 4567</div>
<div class="a t" style="left:474.80px;top:163.39px;font-size:5.5px;color:#111;font-weight:bold;transform:scaleX(0.9100);transform-origin:0 0;">NY</div>
<div class="a t" style="left:516.90px;top:163.39px;font-size:5.5px;color:#111;font-weight:bold;transform:scaleX(0.9100);transform-origin:0 0;">Bold</div>
<div class="a t" style="left:195.70px;top:171.23px;font-size:5.5px;color:#111;font-weight:bold;transform:scaleX(0.9100);transform-origin:0 0;">Fred</div>
<div class="a t" style="left:256.50px;top:171.23px;font-size:5.5px;color:#111;font-weight:bold;transform:scaleX(0.9100);transform-origin:0 0;">Eagle</div>
<div class="a t" style="left:319.30px;top:171.23px;font-size:5.5px;color:#111;font-weight:bold;transform:scaleX(0.9100);transform-origin:0 0;">New York</div>
<div class="a t" style="left:422.00px;top:171.23px;font-size:5.5px;color:#111;font-weight:bold;">212 123 4567</div>
<div class="a t" style="left:474.80px;top:171.23px;font-size:5.5px;color:#111;font-weight:bold;transform:scaleX(0.9100);transform-origin:0 0;">NY</div>
<div class="a t" style="left:516.90px;top:171.23px;font-size:5.5px;color:#111;font-weight:bold;transform:scaleX(0.9100);transform-origin:0 0;">Superbold</div>
<div class="a t" style="left:195.70px;top:179.07px;font-size:5.5px;color:#111;font-weight:bold;transform:scaleX(0.9100);transform-origin:0 0;">Fred</div>
<div class="a t" style="left:256.50px;top:179.07px;font-size:5.5px;color:#111;font-weight:bold;transform:scaleX(0.9100);transform-origin:0 0;">Farrington-Smythe</div>
<div class="a t" style="left:319.30px;top:179.07px;font-size:5.5px;color:#111;font-weight:bold;transform:scaleX(0.9100);transform-origin:0 0;">New York</div>
<div class="a t" style="left:422.00px;top:179.07px;font-size:5.5px;color:#111;font-weight:bold;">212 123 4567</div>
<div class="a t" style="left:474.80px;top:179.07px;font-size:5.5px;color:#111;font-weight:bold;transform:scaleX(0.9100);transform-origin:0 0;">NY</div>
<div class="a t" style="left:516.90px;top:179.07px;font-size:5.5px;color:#111;font-weight:bold;transform:scaleX(0.9100);transform-origin:0 0;">Plain</div>
<div class="a t" style="left:195.70px;top:186.91px;font-size:5.5px;color:#111;font-weight:bold;transform:scaleX(0.9100);transform-origin:0 0;">Peter</div>
<div class="a t" style="left:256.50px;top:186.91px;font-size:5.5px;color:#111;font-weight:bold;transform:scaleX(0.9100);transform-origin:0 0;">Flack</div>
<div class="a t" style="left:319.30px;top:186.91px;font-size:5.5px;color:#111;font-weight:bold;transform:scaleX(0.9100);transform-origin:0 0;">Santa Monica</div>
<div class="a t" style="left:422.00px;top:186.91px;font-size:5.5px;color:#111;font-weight:bold;">444 555 6666</div>
<div class="a t" style="left:474.80px;top:186.91px;font-size:5.5px;color:#111;font-weight:bold;transform:scaleX(0.9100);transform-origin:0 0;">CA</div>
<div class="a t" style="left:516.90px;top:186.91px;font-size:5.5px;color:#111;font-weight:bold;transform:scaleX(0.9100);transform-origin:0 0;">Bold</div>
<div class="a t" style="left:195.70px;top:194.75px;font-size:5.5px;color:#111;font-weight:bold;transform:scaleX(0.9100);transform-origin:0 0;">Fred</div>
<div class="a t" style="left:256.50px;top:194.75px;font-size:5.5px;color:#111;font-weight:bold;transform:scaleX(0.9100);transform-origin:0 0;">Gunnington</div>
<div class="a t" style="left:319.30px;top:194.75px;font-size:5.5px;color:#111;font-weight:bold;transform:scaleX(0.9100);transform-origin:0 0;">New York</div>
<div class="a t" style="left:422.00px;top:194.75px;font-size:5.5px;color:#111;font-weight:bold;">212 123 4567</div>
<div class="a t" style="left:474.80px;top:194.75px;font-size:5.5px;color:#111;font-weight:bold;transform:scaleX(0.9100);transform-origin:0 0;">NY</div>
<div class="a t" style="left:516.90px;top:194.75px;font-size:5.5px;color:#111;font-weight:bold;transform:scaleX(0.9100);transform-origin:0 0;">Plain</div>
<div class="a t" style="left:195.70px;top:202.59px;font-size:5.5px;color:#111;font-weight:bold;transform:scaleX(0.9100);transform-origin:0 0;">Kathryn</div>
<div class="a t" style="left:256.50px;top:202.59px;font-size:5.5px;color:#111;font-weight:bold;transform:scaleX(0.9100);transform-origin:0 0;">Harrison</div>
<div class="a t" style="left:319.30px;top:202.59px;font-size:5.5px;color:#111;font-weight:bold;transform:scaleX(0.9100);transform-origin:0 0;">San Bernardino</div>
<div class="a t" style="left:422.00px;top:202.59px;font-size:5.5px;color:#111;font-weight:bold;">333 123 1234</div>
<div class="a t" style="left:474.80px;top:202.59px;font-size:5.5px;color:#111;font-weight:bold;transform:scaleX(0.9100);transform-origin:0 0;">CA</div>
<div class="a t" style="left:516.90px;top:202.59px;font-size:5.5px;color:#111;font-weight:bold;transform:scaleX(0.9100);transform-origin:0 0;">Plain</div>
<div class="a t" style="left:195.70px;top:210.43px;font-size:5.5px;color:#111;font-weight:bold;transform:scaleX(0.9100);transform-origin:0 0;">Peter</div>
<div class="a t" style="left:256.50px;top:210.43px;font-size:5.5px;color:#111;font-weight:bold;transform:scaleX(0.9100);transform-origin:0 0;">Heath</div>
<div class="a t" style="left:319.30px;top:210.43px;font-size:5.5px;color:#111;font-weight:bold;transform:scaleX(0.9100);transform-origin:0 0;">Santa Monica</div>
<div class="a t" style="left:422.00px;top:210.43px;font-size:5.5px;color:#111;font-weight:bold;">444 555 6666</div>
<div class="a t" style="left:474.80px;top:210.43px;font-size:5.5px;color:#111;font-weight:bold;transform:scaleX(0.9100);transform-origin:0 0;">CA</div>
<div class="a t" style="left:516.90px;top:210.43px;font-size:5.5px;color:#111;font-weight:bold;transform:scaleX(0.9100);transform-origin:0 0;">Plain</div>
<div class="a t" style="left:195.70px;top:218.27px;font-size:5.5px;color:#111;font-weight:bold;transform:scaleX(0.9100);transform-origin:0 0;">Fred</div>
<div class="a t" style="left:256.50px;top:218.27px;font-size:5.5px;color:#111;font-weight:bold;transform:scaleX(0.9100);transform-origin:0 0;">INGLENOOK</div>
<div class="a t" style="left:319.30px;top:218.27px;font-size:5.5px;color:#111;font-weight:bold;transform:scaleX(0.9100);transform-origin:0 0;">New York</div>
<div class="a t" style="left:422.00px;top:218.27px;font-size:5.5px;color:#111;font-weight:bold;">212 123 4567</div>
<div class="a t" style="left:474.80px;top:218.27px;font-size:5.5px;color:#111;font-weight:bold;transform:scaleX(0.9100);transform-origin:0 0;">NY</div>
<div class="a t" style="left:516.90px;top:218.27px;font-size:5.5px;color:#111;font-weight:bold;transform:scaleX(0.9100);transform-origin:0 0;">Plain</div>
<div class="a t" style="left:195.70px;top:226.11px;font-size:5.5px;color:#111;font-weight:bold;transform:scaleX(0.9100);transform-origin:0 0;">Kathryn</div>
<div class="a t" style="left:256.50px;top:226.11px;font-size:5.5px;color:#111;font-weight:bold;transform:scaleX(0.9100);transform-origin:0 0;">Jumper</div>
<div class="a t" style="left:319.30px;top:226.11px;font-size:5.5px;color:#111;font-weight:bold;transform:scaleX(0.9100);transform-origin:0 0;">San Bernardino</div>
<div class="a t" style="left:422.00px;top:226.11px;font-size:5.5px;color:#111;font-weight:bold;">333 123 1234</div>
<div class="a t" style="left:474.80px;top:226.11px;font-size:5.5px;color:#111;font-weight:bold;transform:scaleX(0.9100);transform-origin:0 0;">CA</div>
<div class="a t" style="left:516.90px;top:226.11px;font-size:5.5px;color:#111;font-weight:bold;transform:scaleX(0.9100);transform-origin:0 0;">Plain</div>
<div class="a t" style="left:195.70px;top:233.95px;font-size:5.5px;color:#111;font-weight:bold;transform:scaleX(0.9100);transform-origin:0 0;">Peter</div>
<div class="a t" style="left:256.50px;top:233.95px;font-size:5.5px;color:#111;font-weight:bold;transform:scaleX(0.9100);transform-origin:0 0;">Kellogg</div>
<div class="a t" style="left:319.30px;top:233.95px;font-size:5.5px;color:#111;font-weight:bold;transform:scaleX(0.9100);transform-origin:0 0;">Santa Monica</div>
<div class="a t" style="left:422.00px;top:233.95px;font-size:5.5px;color:#111;font-weight:bold;">444 555 6666</div>
<div class="a t" style="left:474.80px;top:233.95px;font-size:5.5px;color:#111;font-weight:bold;transform:scaleX(0.9100);transform-origin:0 0;">CA</div>
<div class="a t" style="left:516.90px;top:233.95px;font-size:5.5px;color:#111;font-weight:bold;transform:scaleX(0.9100);transform-origin:0 0;">Bold</div>
<div class="a t" style="left:195.70px;top:241.79px;font-size:5.5px;color:#111;font-weight:bold;transform:scaleX(0.9100);transform-origin:0 0;">Kathryn</div>
<div class="a t" style="left:256.50px;top:241.79px;font-size:5.5px;color:#111;font-weight:bold;transform:scaleX(0.9100);transform-origin:0 0;">Lemon</div>
<div class="a t" style="left:319.30px;top:241.79px;font-size:5.5px;color:#111;font-weight:bold;transform:scaleX(0.9100);transform-origin:0 0;">San Bernardino</div>
<div class="a t" style="left:422.00px;top:241.79px;font-size:5.5px;color:#111;font-weight:bold;">333 123 1234</div>
<div class="a t" style="left:474.80px;top:241.79px;font-size:5.5px;color:#111;font-weight:bold;transform:scaleX(0.9100);transform-origin:0 0;">CA</div>
<div class="a t" style="left:516.90px;top:241.79px;font-size:5.5px;color:#111;font-weight:bold;transform:scaleX(0.9100);transform-origin:0 0;">Plain</div>
<div class="a t" style="left:195.70px;top:249.63px;font-size:5.5px;color:#111;font-weight:bold;transform:scaleX(0.9100);transform-origin:0 0;">Kathryn</div>
<div class="a t" style="left:256.50px;top:249.63px;font-size:5.5px;color:#111;font-weight:bold;transform:scaleX(0.9100);transform-origin:0 0;">Lennon</div>
<div class="a t" style="left:319.30px;top:249.63px;font-size:5.5px;color:#111;font-weight:bold;transform:scaleX(0.9100);transform-origin:0 0;">San Bernardino</div>
<div class="a t" style="left:422.00px;top:249.63px;font-size:5.5px;color:#111;font-weight:bold;">333 123 1234</div>
<div class="a t" style="left:474.80px;top:249.63px;font-size:5.5px;color:#111;font-weight:bold;transform:scaleX(0.9100);transform-origin:0 0;">CA</div>
<div class="a t" style="left:516.90px;top:249.63px;font-size:5.5px;color:#111;font-weight:bold;transform:scaleX(0.9100);transform-origin:0 0;">Plain</div>
<div class="a t" style="left:195.70px;top:257.47px;font-size:5.5px;color:#111;font-weight:bold;transform:scaleX(0.9100);transform-origin:0 0;">Michael</div>
<div class="a t" style="left:256.50px;top:257.47px;font-size:5.5px;color:#111;font-weight:bold;transform:scaleX(0.9100);transform-origin:0 0;">Livingston-Taylor</div>
<div class="a t" style="left:319.30px;top:257.47px;font-size:5.5px;color:#111;font-weight:bold;transform:scaleX(0.9100);transform-origin:0 0;">San Francisco</div>
<div class="a t" style="left:422.00px;top:257.47px;font-size:5.5px;color:#111;font-weight:bold;">222 123 1234</div>
<div class="a t" style="left:474.80px;top:257.47px;font-size:5.5px;color:#111;font-weight:bold;transform:scaleX(0.9100);transform-origin:0 0;">CA</div>
<div class="a t" style="left:516.90px;top:257.47px;font-size:5.5px;color:#111;font-weight:bold;transform:scaleX(0.9100);transform-origin:0 0;">Plain</div>
<div class="a t" style="left:195.70px;top:265.31px;font-size:5.5px;color:#111;font-weight:bold;transform:scaleX(0.9100);transform-origin:0 0;">Joe</div>
<div class="a t" style="left:256.50px;top:265.31px;font-size:5.5px;color:#111;font-weight:bold;transform:scaleX(0.9100);transform-origin:0 0;">Martin</div>
<div class="a t" style="left:319.30px;top:265.31px;font-size:5.5px;color:#111;font-weight:bold;transform:scaleX(0.9100);transform-origin:0 0;">Los Angeles</div>
<div class="a t" style="left:422.00px;top:265.31px;font-size:5.5px;color:#111;font-weight:bold;">333 456 7899</div>
<div class="a t" style="left:474.80px;top:265.31px;font-size:5.5px;color:#111;font-weight:bold;transform:scaleX(0.9100);transform-origin:0 0;">CA</div>
<div class="a t" style="left:516.90px;top:265.31px;font-size:5.5px;color:#111;font-weight:bold;transform:scaleX(0.9100);transform-origin:0 0;">Plain</div>
<div class="a t" style="left:195.70px;top:273.15px;font-size:5.5px;color:#111;font-weight:bold;transform:scaleX(0.9100);transform-origin:0 0;">Kathryn</div>
<div class="a t" style="left:256.50px;top:273.15px;font-size:5.5px;color:#111;font-weight:bold;transform:scaleX(0.9100);transform-origin:0 0;">McCartney</div>
<div class="a t" style="left:319.30px;top:273.15px;font-size:5.5px;color:#111;font-weight:bold;transform:scaleX(0.9100);transform-origin:0 0;">San Bernardino</div>
<div class="a t" style="left:422.00px;top:273.15px;font-size:5.5px;color:#111;font-weight:bold;">333 123 1234</div>
<div class="a t" style="left:474.80px;top:273.15px;font-size:5.5px;color:#111;font-weight:bold;transform:scaleX(0.9100);transform-origin:0 0;">CA</div>
<div class="a t" style="left:516.90px;top:273.15px;font-size:5.5px;color:#111;font-weight:bold;transform:scaleX(0.9100);transform-origin:0 0;">Plain</div>
<div class="a t" style="left:195.70px;top:280.99px;font-size:5.5px;color:#111;font-weight:bold;transform:scaleX(0.9100);transform-origin:0 0;">Michael</div>
<div class="a t" style="left:256.50px;top:280.99px;font-size:5.5px;color:#111;font-weight:bold;transform:scaleX(0.9100);transform-origin:0 0;">Montagu</div>
<div class="a t" style="left:319.30px;top:280.99px;font-size:5.5px;color:#111;font-weight:bold;transform:scaleX(0.9100);transform-origin:0 0;">San Francisco</div>
<div class="a t" style="left:422.00px;top:280.99px;font-size:5.5px;color:#111;font-weight:bold;">222 123 1234</div>
<div class="a t" style="left:474.80px;top:280.99px;font-size:5.5px;color:#111;font-weight:bold;transform:scaleX(0.9100);transform-origin:0 0;">CA</div>
<div class="a t" style="left:516.90px;top:280.99px;font-size:5.5px;color:#111;font-weight:bold;transform:scaleX(0.9100);transform-origin:0 0;">Plain</div>
<div class="a t" style="left:195.70px;top:288.83px;font-size:5.5px;color:#111;font-weight:bold;transform:scaleX(0.9100);transform-origin:0 0;">Fred</div>
<div class="a t" style="left:256.50px;top:288.83px;font-size:5.5px;color:#111;font-weight:bold;transform:scaleX(0.9100);transform-origin:0 0;">Mortenson</div>
<div class="a t" style="left:319.30px;top:288.83px;font-size:5.5px;color:#111;font-weight:bold;transform:scaleX(0.9100);transform-origin:0 0;">New York</div>
<div class="a t" style="left:422.00px;top:288.83px;font-size:5.5px;color:#111;font-weight:bold;">212 123 4567</div>
<div class="a t" style="left:474.80px;top:288.83px;font-size:5.5px;color:#111;font-weight:bold;transform:scaleX(0.9100);transform-origin:0 0;">NY</div>
<div class="a t" style="left:516.90px;top:288.83px;font-size:5.5px;color:#111;font-weight:bold;transform:scaleX(0.9100);transform-origin:0 0;">Bold</div>
<div class="a t" style="left:195.70px;top:296.67px;font-size:5.5px;color:#111;font-weight:bold;transform:scaleX(0.9100);transform-origin:0 0;">Fred</div>
<div class="a t" style="left:256.50px;top:296.67px;font-size:5.5px;color:#111;font-weight:bold;transform:scaleX(0.9100);transform-origin:0 0;">Norris</div>
<div class="a t" style="left:319.30px;top:296.67px;font-size:5.5px;color:#111;font-weight:bold;transform:scaleX(0.9100);transform-origin:0 0;">New York</div>
<div class="a t" style="left:422.00px;top:296.67px;font-size:5.5px;color:#111;font-weight:bold;">212 123 4567</div>
<div class="a t" style="left:474.80px;top:296.67px;font-size:5.5px;color:#111;font-weight:bold;transform:scaleX(0.9100);transform-origin:0 0;">NY</div>
<div class="a t" style="left:516.90px;top:296.67px;font-size:5.5px;color:#111;font-weight:bold;transform:scaleX(0.9100);transform-origin:0 0;">Plain</div>
<div class="a t" style="left:195.70px;top:304.51px;font-size:5.5px;color:#111;font-weight:bold;transform:scaleX(0.9100);transform-origin:0 0;">Fred</div>
<div class="a t" style="left:256.50px;top:304.51px;font-size:5.5px;color:#111;font-weight:bold;transform:scaleX(0.9100);transform-origin:0 0;">Ockney</div>
<div class="a t" style="left:319.30px;top:304.51px;font-size:5.5px;color:#111;font-weight:bold;transform:scaleX(0.9100);transform-origin:0 0;">New York</div>
<div class="a t" style="left:422.00px;top:304.51px;font-size:5.5px;color:#111;font-weight:bold;">212 123 4567</div>
<div class="a t" style="left:474.80px;top:304.51px;font-size:5.5px;color:#111;font-weight:bold;transform:scaleX(0.9100);transform-origin:0 0;">NY</div>
<div class="a t" style="left:516.90px;top:304.51px;font-size:5.5px;color:#111;font-weight:bold;transform:scaleX(0.9100);transform-origin:0 0;">Plain</div>
<div class="a t" style="left:195.70px;top:312.35px;font-size:5.5px;color:#111;font-weight:bold;transform:scaleX(0.9100);transform-origin:0 0;">Michael</div>
<div class="a t" style="left:256.50px;top:312.35px;font-size:5.5px;color:#111;font-weight:bold;transform:scaleX(0.9100);transform-origin:0 0;">Orange</div>
<div class="a t" style="left:319.30px;top:312.35px;font-size:5.5px;color:#111;font-weight:bold;transform:scaleX(0.9100);transform-origin:0 0;">San Francisco</div>
<div class="a t" style="left:422.00px;top:312.35px;font-size:5.5px;color:#111;font-weight:bold;">222 123 1234</div>
<div class="a t" style="left:474.80px;top:312.35px;font-size:5.5px;color:#111;font-weight:bold;transform:scaleX(0.9100);transform-origin:0 0;">CA</div>
<div class="a t" style="left:516.90px;top:312.35px;font-size:5.5px;color:#111;font-weight:bold;transform:scaleX(0.9100);transform-origin:0 0;">Plain</div>
<div class="a t" style="left:195.70px;top:320.19px;font-size:5.5px;color:#111;font-weight:bold;transform:scaleX(0.9100);transform-origin:0 0;">Peter</div>
<div class="a t" style="left:256.50px;top:320.19px;font-size:5.5px;color:#111;font-weight:bold;transform:scaleX(0.9100);transform-origin:0 0;">Pan</div>
<div class="a t" style="left:319.30px;top:320.19px;font-size:5.5px;color:#111;font-weight:bold;transform:scaleX(0.9100);transform-origin:0 0;">Santa Monica</div>
<div class="a t" style="left:422.00px;top:320.19px;font-size:5.5px;color:#111;font-weight:bold;">444 555 6666</div>
<div class="a t" style="left:474.80px;top:320.19px;font-size:5.5px;color:#111;font-weight:bold;transform:scaleX(0.9100);transform-origin:0 0;">CA</div>
<div class="a t" style="left:516.90px;top:320.19px;font-size:5.5px;color:#111;font-weight:bold;transform:scaleX(0.9100);transform-origin:0 0;">Plain</div>
<div class="a t" style="left:195.70px;top:328.03px;font-size:5.5px;color:#111;font-weight:bold;transform:scaleX(0.9100);transform-origin:0 0;">Michael</div>
<div class="a t" style="left:256.50px;top:328.03px;font-size:5.5px;color:#111;font-weight:bold;transform:scaleX(0.9100);transform-origin:0 0;">Parker</div>
<div class="a t" style="left:319.30px;top:328.03px;font-size:5.5px;color:#111;font-weight:bold;transform:scaleX(0.9100);transform-origin:0 0;">San Francisco</div>
<div class="a t" style="left:422.00px;top:328.03px;font-size:5.5px;color:#111;font-weight:bold;">222 123 1234</div>
<div class="a t" style="left:474.80px;top:328.03px;font-size:5.5px;color:#111;font-weight:bold;transform:scaleX(0.9100);transform-origin:0 0;">CA</div>
<div class="a t" style="left:516.90px;top:328.03px;font-size:5.5px;color:#111;font-weight:bold;transform:scaleX(0.9100);transform-origin:0 0;">Bold</div>
<div class="a t" style="left:195.70px;top:335.87px;font-size:5.5px;color:#111;font-weight:bold;transform:scaleX(0.9100);transform-origin:0 0;">Peter</div>
<div class="a t" style="left:256.50px;top:335.87px;font-size:5.5px;color:#111;font-weight:bold;transform:scaleX(0.9100);transform-origin:0 0;">Parker</div>
<div class="a t" style="left:319.30px;top:335.87px;font-size:5.5px;color:#111;font-weight:bold;transform:scaleX(0.9100);transform-origin:0 0;">Santa Monica</div>
<div class="a t" style="left:422.00px;top:335.87px;font-size:5.5px;color:#111;font-weight:bold;">444 555 6666</div>
<div class="a t" style="left:474.80px;top:335.87px;font-size:5.5px;color:#111;font-weight:bold;transform:scaleX(0.9100);transform-origin:0 0;">CA</div>
<div class="a t" style="left:516.90px;top:335.87px;font-size:5.5px;color:#111;font-weight:bold;transform:scaleX(0.9100);transform-origin:0 0;">Plain</div>
<div class="a t" style="left:195.70px;top:343.71px;font-size:5.5px;color:#111;font-weight:bold;transform:scaleX(0.9100);transform-origin:0 0;">Joe</div>
<div class="a t" style="left:256.50px;top:343.71px;font-size:5.5px;color:#111;font-weight:bold;transform:scaleX(0.9100);transform-origin:0 0;">Platernacle</div>
<div class="a t" style="left:319.30px;top:343.71px;font-size:5.5px;color:#111;font-weight:bold;transform:scaleX(0.9100);transform-origin:0 0;">Los Angeles</div>
<div class="a t" style="left:422.00px;top:343.71px;font-size:5.5px;color:#111;font-weight:bold;">333 456 7899</div>
<div class="a t" style="left:474.80px;top:343.71px;font-size:5.5px;color:#111;font-weight:bold;transform:scaleX(0.9100);transform-origin:0 0;">CA</div>
<div class="a t" style="left:516.90px;top:343.71px;font-size:5.5px;color:#111;font-weight:bold;transform:scaleX(0.9100);transform-origin:0 0;">Plain</div>
<div class="a t" style="left:195.70px;top:351.55px;font-size:5.5px;color:#111;font-weight:bold;transform:scaleX(0.9100);transform-origin:0 0;">Peter</div>
<div class="a t" style="left:256.50px;top:351.55px;font-size:5.5px;color:#111;font-weight:bold;transform:scaleX(0.9100);transform-origin:0 0;">Portman</div>
<div class="a t" style="left:319.30px;top:351.55px;font-size:5.5px;color:#111;font-weight:bold;transform:scaleX(0.9100);transform-origin:0 0;">Santa Monica</div>
<div class="a t" style="left:422.00px;top:351.55px;font-size:5.5px;color:#111;font-weight:bold;">444 555 6666</div>
<div class="a t" style="left:474.80px;top:351.55px;font-size:5.5px;color:#111;font-weight:bold;transform:scaleX(0.9100);transform-origin:0 0;">CA</div>
<div class="a t" style="left:516.90px;top:351.55px;font-size:5.5px;color:#111;font-weight:bold;transform:scaleX(0.9100);transform-origin:0 0;">Superbold</div>
<div class="a t" style="left:195.70px;top:359.39px;font-size:5.5px;color:#111;font-weight:bold;transform:scaleX(0.9100);transform-origin:0 0;">Kathryn</div>
<div class="a t" style="left:256.50px;top:359.39px;font-size:5.5px;color:#111;font-weight:bold;transform:scaleX(0.9100);transform-origin:0 0;">Robbins</div>
<div class="a t" style="left:319.30px;top:359.39px;font-size:5.5px;color:#111;font-weight:bold;transform:scaleX(0.9100);transform-origin:0 0;">San Bernardino</div>
<div class="a t" style="left:422.00px;top:359.39px;font-size:5.5px;color:#111;font-weight:bold;">333 123 1234</div>
<div class="a t" style="left:474.80px;top:359.39px;font-size:5.5px;color:#111;font-weight:bold;transform:scaleX(0.9100);transform-origin:0 0;">CA</div>
<div class="a t" style="left:516.90px;top:359.39px;font-size:5.5px;color:#111;font-weight:bold;transform:scaleX(0.9100);transform-origin:0 0;">Plain</div>
<div class="a t" style="left:195.70px;top:367.23px;font-size:5.5px;color:#111;font-weight:bold;transform:scaleX(0.9100);transform-origin:0 0;">Kathryn</div>
<div class="a t" style="left:256.50px;top:367.23px;font-size:5.5px;color:#111;font-weight:bold;transform:scaleX(0.9100);transform-origin:0 0;">Robbins</div>
<div class="a t" style="left:319.30px;top:367.23px;font-size:5.5px;color:#111;font-weight:bold;transform:scaleX(0.9100);transform-origin:0 0;">San Bernardino</div>
<div class="a t" style="left:422.00px;top:367.23px;font-size:5.5px;color:#111;font-weight:bold;">333 123 1234</div>
<div class="a t" style="left:474.80px;top:367.23px;font-size:5.5px;color:#111;font-weight:bold;transform:scaleX(0.9100);transform-origin:0 0;">CA</div>
<div class="a t" style="left:516.90px;top:367.23px;font-size:5.5px;color:#111;font-weight:bold;transform:scaleX(0.9100);transform-origin:0 0;">Plain</div>
<div class="a t" style="left:195.70px;top:375.07px;font-size:5.5px;color:#111;font-weight:bold;transform:scaleX(0.9100);transform-origin:0 0;">Michael</div>
<div class="a t" style="left:256.50px;top:375.07px;font-size:5.5px;color:#111;font-weight:bold;transform:scaleX(0.9100);transform-origin:0 0;">Robinson</div>
<div class="a t" style="left:319.30px;top:375.07px;font-size:5.5px;color:#111;font-weight:bold;transform:scaleX(0.9100);transform-origin:0 0;">San Francisco</div>
<div class="a t" style="left:422.00px;top:375.07px;font-size:5.5px;color:#111;font-weight:bold;">222 123 1234</div>
<div class="a t" style="left:474.80px;top:375.07px;font-size:5.5px;color:#111;font-weight:bold;transform:scaleX(0.9100);transform-origin:0 0;">CA</div>
<div class="a t" style="left:516.90px;top:375.07px;font-size:5.5px;color:#111;font-weight:bold;transform:scaleX(0.9100);transform-origin:0 0;">Plain</div>
<div class="a t" style="left:195.70px;top:382.91px;font-size:5.5px;color:#111;font-weight:bold;transform:scaleX(0.9100);transform-origin:0 0;">Joe</div>
<div class="a t" style="left:256.50px;top:382.91px;font-size:5.5px;color:#111;font-weight:bold;transform:scaleX(0.9100);transform-origin:0 0;">Smith</div>
<div class="a t" style="left:319.30px;top:382.91px;font-size:5.5px;color:#111;font-weight:bold;transform:scaleX(0.9100);transform-origin:0 0;">Los Angeles</div>
<div class="a t" style="left:422.00px;top:382.91px;font-size:5.5px;color:#111;font-weight:bold;">333 456 7899</div>
<div class="a t" style="left:474.80px;top:382.91px;font-size:5.5px;color:#111;font-weight:bold;transform:scaleX(0.9100);transform-origin:0 0;">CA</div>
<div class="a t" style="left:516.90px;top:382.91px;font-size:5.5px;color:#111;font-weight:bold;transform:scaleX(0.9100);transform-origin:0 0;">Plain</div>
<div class="a t" style="left:195.70px;top:390.75px;font-size:5.5px;color:#111;font-weight:bold;transform:scaleX(0.9100);transform-origin:0 0;">Fred</div>
<div class="a t" style="left:256.50px;top:390.75px;font-size:5.5px;color:#111;font-weight:bold;transform:scaleX(0.9100);transform-origin:0 0;">Smith</div>
<div class="a t" style="left:319.30px;top:390.75px;font-size:5.5px;color:#111;font-weight:bold;transform:scaleX(0.9100);transform-origin:0 0;">New York</div>
<div class="a t" style="left:422.00px;top:390.75px;font-size:5.5px;color:#111;font-weight:bold;">212 123 4567</div>
<div class="a t" style="left:474.80px;top:390.75px;font-size:5.5px;color:#111;font-weight:bold;transform:scaleX(0.9100);transform-origin:0 0;">NY</div>
<div class="a t" style="left:516.90px;top:390.75px;font-size:5.5px;color:#111;font-weight:bold;transform:scaleX(0.9100);transform-origin:0 0;">Plain</div>
<div class="a t" style="left:195.70px;top:398.59px;font-size:5.5px;color:#111;font-weight:bold;transform:scaleX(0.9100);transform-origin:0 0;">Kathryn</div>
<div class="a t" style="left:256.50px;top:398.59px;font-size:5.5px;color:#111;font-weight:bold;transform:scaleX(0.9100);transform-origin:0 0;">Starr</div>
<div class="a t" style="left:319.30px;top:398.59px;font-size:5.5px;color:#111;font-weight:bold;transform:scaleX(0.9100);transform-origin:0 0;">San Bernardino</div>
<div class="a t" style="left:422.00px;top:398.59px;font-size:5.5px;color:#111;font-weight:bold;">333 123 1234</div>
<div class="a t" style="left:474.80px;top:398.59px;font-size:5.5px;color:#111;font-weight:bold;transform:scaleX(0.9100);transform-origin:0 0;">CA</div>
<div class="a t" style="left:516.90px;top:398.59px;font-size:5.5px;color:#111;font-weight:bold;transform:scaleX(0.9100);transform-origin:0 0;">Superbold</div>
<div class="a t" style="left:195.70px;top:406.43px;font-size:5.5px;color:#111;font-weight:bold;transform:scaleX(0.9100);transform-origin:0 0;">Michael</div>
<div class="a t" style="left:256.50px;top:406.43px;font-size:5.5px;color:#111;font-weight:bold;transform:scaleX(0.9100);transform-origin:0 0;">Watson</div>
<div class="a t" style="left:319.30px;top:406.43px;font-size:5.5px;color:#111;font-weight:bold;transform:scaleX(0.9100);transform-origin:0 0;">San Francisco</div>
<div class="a t" style="left:422.00px;top:406.43px;font-size:5.5px;color:#111;font-weight:bold;">222 123 1234</div>
<div class="a t" style="left:474.80px;top:406.43px;font-size:5.5px;color:#111;font-weight:bold;transform:scaleX(0.9100);transform-origin:0 0;">CA</div>
<div class="a t" style="left:516.90px;top:406.43px;font-size:5.5px;color:#111;font-weight:bold;transform:scaleX(0.9100);transform-origin:0 0;">Superbold</div>
<div class="a t" style="left:195.70px;top:414.27px;font-size:5.5px;color:#111;font-weight:bold;transform:scaleX(0.9100);transform-origin:0 0;">Michael</div>
<div class="a t" style="left:256.50px;top:414.27px;font-size:5.5px;color:#111;font-weight:bold;transform:scaleX(0.9100);transform-origin:0 0;">Watts</div>
<div class="a t" style="left:319.30px;top:414.27px;font-size:5.5px;color:#111;font-weight:bold;transform:scaleX(0.9100);transform-origin:0 0;">San Francisco</div>
<div class="a t" style="left:422.00px;top:414.27px;font-size:5.5px;color:#111;font-weight:bold;">222 123 1234</div>
<div class="a t" style="left:474.80px;top:414.27px;font-size:5.5px;color:#111;font-weight:bold;transform:scaleX(0.9100);transform-origin:0 0;">CA</div>
<div class="a t" style="left:516.90px;top:414.27px;font-size:5.5px;color:#111;font-weight:bold;transform:scaleX(0.9100);transform-origin:0 0;">Plain</div>
<div class="a t" style="left:195.70px;top:422.11px;font-size:5.5px;color:#111;font-weight:bold;transform:scaleX(0.9100);transform-origin:0 0;">Joe</div>
<div class="a t" style="left:256.50px;top:422.11px;font-size:5.5px;color:#111;font-weight:bold;transform:scaleX(0.9100);transform-origin:0 0;">White</div>
<div class="a t" style="left:319.30px;top:422.11px;font-size:5.5px;color:#111;font-weight:bold;transform:scaleX(0.9100);transform-origin:0 0;">Los Angeles</div>
<div class="a t" style="left:422.00px;top:422.11px;font-size:5.5px;color:#111;font-weight:bold;">333 456 7899</div>
<div class="a t" style="left:474.80px;top:422.11px;font-size:5.5px;color:#111;font-weight:bold;transform:scaleX(0.9100);transform-origin:0 0;">CA</div>
<div class="a t" style="left:516.90px;top:422.11px;font-size:5.5px;color:#111;font-weight:bold;transform:scaleX(0.9100);transform-origin:0 0;">Plain</div>
</body></html>
